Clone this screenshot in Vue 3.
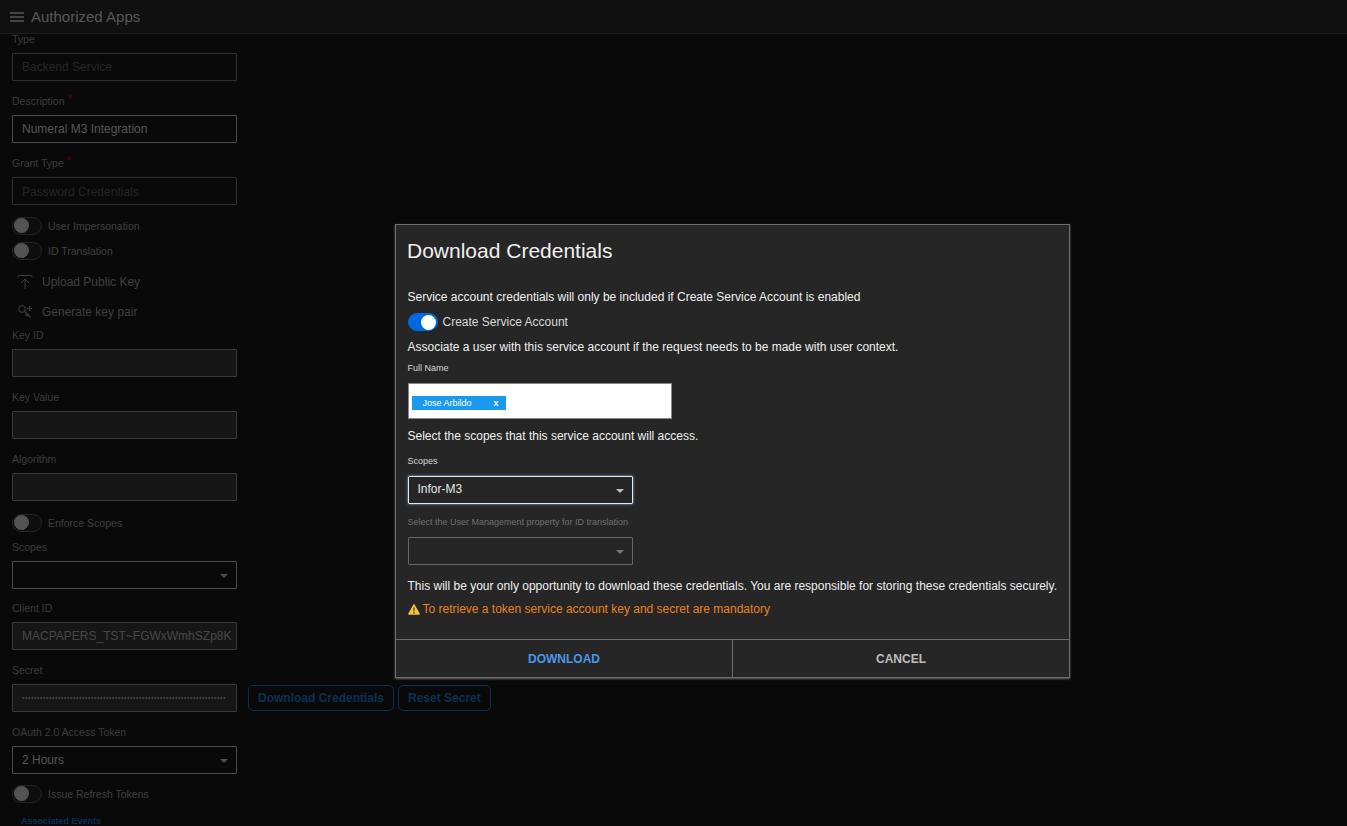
<template>
  <div class="page">
    <header class="topbar">
      <svg class="menu-icon" width="14" height="10" viewBox="0 0 14 10"><path d="M0 1h14M0 5h14M0 9h14" stroke="currentColor" stroke-width="1.4" /></svg>
      <span>Authorized Apps</span>
    </header>

    <main class="form">
      <div class="field">
        <label>Type</label>
        <div class="input disabled">Backend Service</div>
      </div>
      <div class="field">
        <label>Description <i>*</i></label>
        <div class="input active">Numeral M3 Integration</div>
      </div>
      <div class="field">
        <label>Grant Type <i>*</i></label>
        <div class="input disabled grant">Password Credentials</div>
      </div>

      <div class="switch-row impersonation"><span class="switch"></span>User Impersonation</div>
      <div class="switch-row"><span class="switch"></span>ID Translation</div>

      <div class="action-row first">
        <svg width="16" height="16" viewBox="0 0 16 16" fill="none" stroke="currentColor" stroke-width="1">
          <path d="M1 3.500C1 1.800 1.500 1.500 2.500 1.500h11c1 0 1.500.3 1.500 2M8 15V5M4 9l4-4 4 4" />
        </svg>
        Upload Public Key
      </div>
      <div class="action-row">
        <svg width="16" height="16" viewBox="0 0 16 16" fill="none" stroke="currentColor" stroke-width="1.100">
          <circle cx="5" cy="5" r="3.200" />
          <path d="M7.500 7.500l6 6M10 12l2-2M8.500 10.500l1.500 1.500M12.500 2v5M10 4.500h5" />
        </svg>
        Generate key pair
      </div>

      <div class="field after-actions">
        <label>Key ID</label>
        <div class="input filled"></div>
      </div>
      <div class="field">
        <label>Key Value</label>
        <div class="input filled"></div>
      </div>
      <div class="field">
        <label>Algorithm</label>
        <div class="input filled"></div>
      </div>

      <div class="switch-row enforce"><span class="switch"></span>Enforce Scopes</div>

      <div class="field scopes-field">
        <label>Scopes</label>
        <div class="input active select"><span class="caret"></span></div>
      </div>
      <div class="field">
        <label>Client ID</label>
        <div class="input filled text">MACPAPERS_TST~FGWxWmhSZp8K</div>
      </div>
      <div class="field">
        <label>Secret</label>
        <div class="secret-row">
          <div class="input filled text dots">{{ secretDots }}</div>
          <button class="outline wide">Download Credentials</button>
          <button class="outline">Reset Secret</button>
        </div>
      </div>
      <div class="field">
        <label>OAuth 2.0 Access Token</label>
        <div class="input active select">2 Hours<span class="caret"></span></div>
      </div>

      <div class="switch-row issue"><span class="switch"></span>Issue Refresh Tokens</div>
      <div class="events">Associated Events</div>
    </main>

    <div class="overlay"></div>

    <section class="modal">
      <h2>Download Credentials</h2>
      <div class="modal-body">
        <p>Service account credentials will only be included if Create Service Account is enabled</p>
        <div class="modal-switch"><span class="switch on"></span>Create Service Account</div>
        <p>Associate a user with this service account if the request needs to be made with user context.</p>
        <label class="small first-label">Full Name</label>
        <div class="tag-input">
          <span class="chip"><span>Jose Arbildo</span><b>x</b></span>
        </div>
        <p class="scopes-text">Select the scopes that this service account will access.</p>
        <label class="small scopes-label">Scopes</label>
        <div class="modal-select focused">Infor-M3<span class="caret"></span></div>
        <label class="small muted">Select the User Management property for ID translation</label>
        <div class="modal-select off"><span class="caret"></span></div>
        <p class="only">This will be your only opportunity to download these credentials. You are responsible for storing these credentials securely.</p>
        <div class="warning">
          <svg width="12" height="11" viewBox="0 0 12 11">
            <path d="M6 .3c.3 0 .5.1.7.4l5 8.800c.3.6 0 1.200-.7 1.200H1c-.7 0-1-.6-.7-1.200l5-8.800c.2-.3.4-.4.7-.4z" fill="#f5c33b" />
            <path d="M5.400 3.500h1.200l-.2 4h-.8zM5.350 8.200h1.300v1.200h-1.300z" fill="#262626" />
          </svg>
          To retrieve a token service account key and secret are mandatory
        </div>
      </div>
      <footer class="modal-footer">
        <button class="primary">DOWNLOAD</button>
        <button>CANCEL</button>
      </footer>
    </section>
  </div>
</template>

<script setup>
const secretDots = '•'.repeat(68)
</script>

<style scoped>
.page {
  position: relative;
  width: 100%;
  height: 826px;
  overflow: hidden;
  background: #171717;
  color: #9c9c9c;
  font-family: "Liberation Sans", Arial, sans-serif;
  font-size: 12px;
}
.topbar {
  position: relative;
  z-index: 1;
  display: flex;
  align-items: center;
  gap: 7px;
  height: 33px;
  padding-left: 10px;
  background: #282828;
  border-bottom: 1px solid #464646;
  color: #d8d8d8;
  font-size: 15px;
}
.form {
  width: 225px;
  margin-top: -2px;
  margin-left: 12px;
}
.field {
  margin-bottom: 13px;
}
.field label {
  display: block;
  height: 14px;
  margin-bottom: 7px;
  font-size: 10.500px;
  line-height: 14px;
  color: #929292;
}
.field label i {
  position: relative;
  top: -2px;
  color: #d00;
  font-size: 12px;
  font-style: normal;
}
.input {
  position: relative;
  box-sizing: border-box;
  width: 225px;
  height: 28px;
  padding-left: 9px;
  border: 1px solid #737373;
  border-radius: 1px;
  line-height: 26px;
  white-space: nowrap;
  overflow: hidden;
}
.input.disabled {
  color: #5c5c5c;
  line-height: 27px;
}
.input.grant {
  line-height: 28px;
}
.input.active {
  border-color: #bcbcbc;
  color: #d0d0d0;
}
.input.filled {
  background: #373737;
  border-color: #919191;
}
.input.text {
  padding-right: 8px;
  color: #b0b0b0;
}
.input.dots {
  flex: none;
  font-size: 7px;
  letter-spacing: 0.55px;
}
.select .caret {
  right: 8px;
}
.caret {
  position: absolute;
  top: 12px;
  width: 0;
  height: 0;
  border-left: 4px solid transparent;
  border-right: 4px solid transparent;
  border-top: 4px solid #c0c0c0;
}
.switch-row {
  display: flex;
  align-items: center;
  gap: 6px;
  height: 25px;
  font-size: 10.500px;
  color: #9c9c9c;
}
.impersonation {
  margin-top: -5px;
}
.switch {
  position: relative;
  flex: none;
  box-sizing: border-box;
  width: 30px;
  height: 18px;
  border-radius: 9px;
  background: #242424;
  border: 1px solid #555;
}
.switch::after {
  content: "";
  position: absolute;
  top: 0.5px;
  left: 1px;
  width: 15px;
  height: 15px;
  border-radius: 50%;
  background: #d0d0d0;
}
.switch.on {
  background: #0069e0;
  border-color: #0069e0;
}
.switch.on::after {
  left: 12px;
  background: #fff;
}
.action-row {
  display: flex;
  align-items: center;
  gap: 9px;
  height: 30px;
  padding-left: 5px;
  color: #9c9c9c;
}
.action-row.first {
  margin-top: 4px;
}
.after-actions {
  margin-top: 1px;
}
.enforce {
  margin-top: -4px;
}
.scopes-field {
  margin-top: 5px;
  margin-bottom: 12px;
}
.secret-row {
  display: flex;
  align-items: center;
  gap: 4px;
}
.secret-row .input {
  margin-right: 7px;
}
.outline {
  flex: none;
  height: 26px;
  padding: 0 9px;
  background: none;
  border: 1px solid #1a76d4;
  border-radius: 5px;
  color: #1a76d4;
  font: bold 12px "Liberation Sans", Arial, sans-serif;
  white-space: nowrap;
}
.issue {
  margin-top: -6px;
}
.events {
  margin-top: 10px;
  margin-left: 9px;
  color: #1a76d4;
  font-size: 9px;
  font-weight: bold;
}
.overlay {
  position: absolute;
  inset: 0;
  z-index: 2;
  background: rgba(0, 0, 0, 0.6);
}
.modal {
  position: absolute;
  top: 224px;
  left: 395px;
  z-index: 3;
  box-sizing: border-box;
  display: flex;
  flex-direction: column;
  width: 675px;
  height: 454px;
  background: #262626;
  border: 1px solid #6e6e6e;
  box-shadow: 0 1px 2px rgba(255, 255, 255, 0.4);
  color: #f0f0f0;
}
.modal h2 {
  height: 50px;
  margin: 0;
  padding-left: 11px;
  font-size: 21px;
  font-weight: normal;
  line-height: 52px;
}
.modal-body {
  flex: 1;
  padding: 10px 11px 0 11.500px;
}
.modal-body p {
  margin: 0;
  line-height: 25px;
}
.modal-switch {
  display: flex;
  align-items: center;
  gap: 5px;
  height: 24px;
  margin-bottom: 1px;
  color: #d8d8d8;
}
.small {
  display: block;
  height: 14px;
  margin-bottom: 8px;
  font-size: 9px;
  line-height: 14px;
  color: #d8d8d8;
}
.first-label {
  margin-top: 1px;
}
.tag-input {
  box-sizing: border-box;
  width: 264px;
  height: 36px;
  padding: 12px 3px 0;
  background: #fff;
  border: 1px solid #888;
}
.chip {
  display: flex;
  align-items: center;
  justify-content: space-between;
  box-sizing: border-box;
  width: 94px;
  height: 14px;
  padding: 0 7px 0 11px;
  background: #1b98f0;
  font-size: 9px;
  color: #fff;
}
.chip b {
  font-size: 9px;
}
.scopes-text {
  margin-top: 5px !important;
}
.scopes-label {
  margin-top: 5px;
}
.modal-select {
  position: relative;
  box-sizing: border-box;
  width: 225px;
  height: 28px;
  padding-left: 9px;
  border: 1px solid #777;
  border-radius: 1px;
  line-height: 25px;
}
.modal-select .caret {
  right: 8px;
}
.modal-select.focused {
  border-color: #e8e8e8;
  box-shadow: 0 0 3px #7fb2e5;
  color: #e8e8e8;
}
.modal-select.off {
  border-color: #666;
}
.modal-select.off .caret {
  border-top-color: #777;
}
.muted {
  margin-top: 11px;
  color: #6f6f6f;
}
.only {
  margin-top: 9px !important;
}
.warning {
  display: flex;
  align-items: center;
  gap: 3px;
  height: 20px;
  color: #e9831e;
}
.modal-footer {
  display: flex;
  height: 37px;
  border-top: 1px solid #6e6e6e;
}
.modal-footer button {
  flex: 1;
  background: none;
  border: none;
  color: #bdbdbd;
  font: bold 12px "Liberation Sans", Arial, sans-serif;
}
.modal-footer .primary {
  border-right: 1px solid #6e6e6e;
  color: #4a97e8;
}
</style>

<style>
body {
  background: #090909;
}
</style>
